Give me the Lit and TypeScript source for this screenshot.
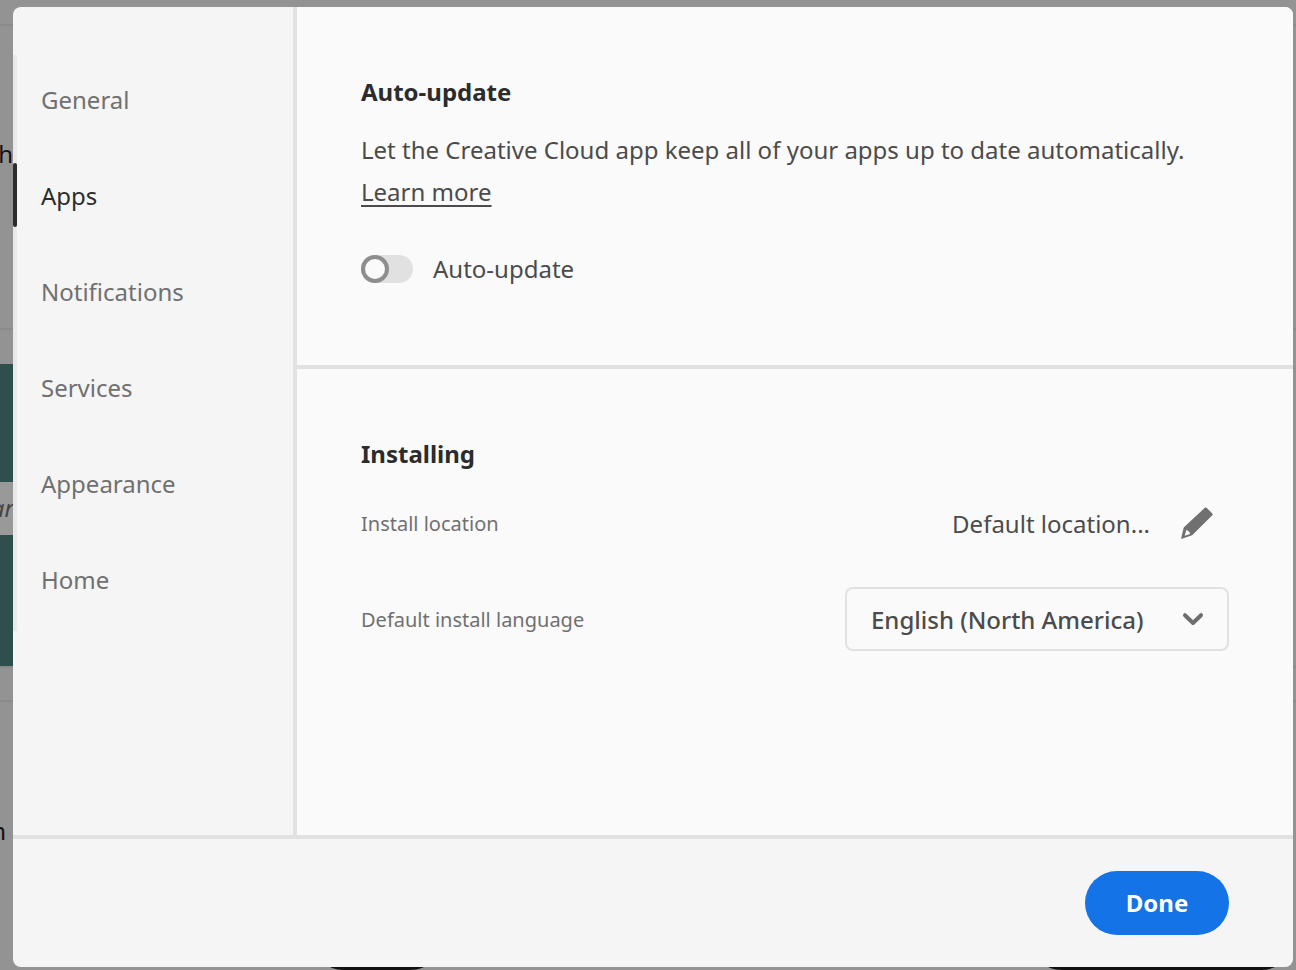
import { LitElement, html, css } from "lit";
import { customElement, state } from "lit/decorators.js";

@customElement("app-root")
export class AppRoot extends LitElement {
  @state() private selected = "Apps";

  private readonly pages = ["General", "Apps", "Notifications", "Services", "Appearance", "Home"];

  static styles = css`
    :host {
      display: block;
      font-family: "Noto Sans", "Open Sans", sans-serif;
      font-size: 24px;
      color: #4b4b4b;
    }
    * {
      box-sizing: border-box;
    }
    .page {
      position: relative;
      display: flex;
      min-height: 100vh;
      padding: 7px 3px 3px 13px;
      background: #939393;
      overflow: hidden;
    }
    .backdrop {
      position: absolute;
      inset: 0;
    }
    .rule {
      position: absolute;
      left: 0;
      right: 0;
      height: 2px;
      background: #8a8a8a;
    }
    .r1 { top: 24px; }
    .r2 { top: 328px; }
    .r3 { top: 666px; }
    .r4 { top: 700px; }
    .tile {
      position: absolute;
      left: 0;
      width: 40px;
      background: #2e4f4c;
    }
    .t1 { top: 364px; height: 118px; }
    .t2 { top: 535px; height: 131px; }
    .band {
      position: absolute;
      left: 0;
      top: 482px;
      width: 40px;
      height: 53px;
      background: #999;
    }
    .bit {
      position: absolute;
      left: 0;
      display: flex;
      justify-content: flex-end;
      line-height: 36px;
      color: #111;
    }
    .b1 { top: 136px; width: 13px; }
    .b2 { top: 490px; width: 14px; font-style: italic; color: #444; }
    .b3 { top: 813px; width: 6px; }
    .pill {
      position: absolute;
      bottom: 0;
      height: 64px;
      border: 3px solid #111;
      border-radius: 32px;
    }
    .p1 { left: 312px; width: 130px; }
    .p2 { right: 3px; width: 263px; }

    .dialog {
      position: relative;
      flex: 1;
      display: flex;
      flex-direction: column;
      border-radius: 8px;
      background: #f5f5f5;
      overflow: hidden;
    }
    .body {
      flex: 1;
      display: flex;
    }
    .side {
      width: 284px;
      padding-top: 48px;
      border-right: 4px solid #e1e1e1;
    }
    .nav {
      display: flex;
      flex-direction: column;
      gap: 32px;
      margin: 0;
      padding: 12px 0 20px;
      list-style: none;
      border-left: 4px solid #eaeaea;
    }
    .item {
      display: block;
      width: 100%;
      height: 64px;
      padding: 0 0 0 24px;
      border: 0;
      background: none;
      font: inherit;
      text-align: left;
      color: #707070;
      cursor: pointer;
    }
    .mark {
      position: relative;
    }
    .mark::before {
      content: "";
      position: absolute;
      left: -4px;
      top: 0;
      bottom: 0;
      width: 4px;
      border-radius: 2px;
      background: #2c2c2c;
    }
    .mark .item {
      color: #2c2c2c;
    }
    .main {
      flex: 1;
      display: flex;
      flex-direction: column;
      background: #fafafa;
    }
    .section {
      padding: 64px;
    }
    .section + .section {
      border-top: 4px solid #e1e1e1;
    }
    h2 {
      margin: 0 0 16px;
      font-size: 24px;
      line-height: 42px;
      font-weight: 700;
      color: #2c2c2c;
    }
    .text {
      margin: 0 0 38px;
      line-height: 42px;
    }
    .link {
      color: inherit;
      text-decoration: underline;
      text-decoration-thickness: 2px;
      text-underline-offset: 4px;
    }
    .switch {
      display: flex;
      align-items: center;
      gap: 20px;
      line-height: 36px;
      margin-bottom: 14px;
    }
    .toggle {
      appearance: none;
      width: 52px;
      height: 28px;
      margin: 0;
      border-radius: 14px;
      background: #e1e1e1;
    }
    .toggle::before {
      content: "";
      display: block;
      width: 28px;
      height: 28px;
      box-sizing: border-box;
      border: 4px solid #8e8e8e;
      border-radius: 14px;
      background: #fafafa;
    }
    .toggle:checked::before {
      margin-left: 24px;
      border-color: #1473e6;
    }
    .row {
      display: flex;
      align-items: center;
      justify-content: space-between;
      height: 64px;
    }
    .row + .row {
      margin-top: 32px;
    }
    .label {
      font-size: 20px;
      color: #707070;
    }
    .place {
      display: flex;
      align-items: center;
    }
    .edit {
      display: flex;
      align-items: center;
      justify-content: center;
      width: 64px;
      height: 64px;
      margin-left: 15px;
      padding: 0;
      border: 0;
      background: none;
    }
    .picker {
      position: relative;
      display: flex;
    }
    .select {
      appearance: none;
      width: 384px;
      height: 64px;
      padding: 0 72px 0 24px;
      border: 2px solid #e1e1e1;
      border-radius: 8px;
      background: #fafafa;
      font: inherit;
      font-weight: 500;
      color: #4b4b4b;
    }
    .chevron {
      position: absolute;
      right: 24px;
      top: 20px;
      pointer-events: none;
    }
    .foot {
      display: flex;
      justify-content: flex-end;
      padding: 32px 64px;
      border-top: 4px solid #e1e1e1;
    }
    .done {
      width: 144px;
      height: 64px;
      padding: 0 0 2px;
      border: 0;
      border-radius: 32px;
      background: #1473e6;
      font: inherit;
      font-weight: 700;
      color: #fff;
    }
  `;

  render() {
    return html`
      <div class="page">
        <div class="backdrop" aria-hidden="true">
          <div class="rule r1"></div>
          <div class="rule r2"></div>
          <div class="rule r3"></div>
          <div class="rule r4"></div>
          <div class="tile t1"></div>
          <div class="band"></div>
          <div class="tile t2"></div>
          <div class="bit b1">h</div>
          <div class="bit b2">ar</div>
          <div class="bit b3">n</div>
          <div class="pill p1"></div>
          <div class="pill p2"></div>
        </div>
        <div class="dialog" role="dialog" aria-label="Preferences">
          <div class="body">
            <nav class="side">
              <ul class="nav">
                ${this.pages.map(
                  (name) => html`<li class=${name === this.selected ? "mark" : ""}>
                    <button class="item" @click=${() => (this.selected = name)}>${name}</button>
                  </li>`
                )}
              </ul>
            </nav>
            <main class="main">
              <section class="section">
                <h2>Auto-update</h2>
                <p class="text">
                  Let the Creative Cloud app keep all of your apps up to date automatically.
                  <a class="link" href="#">Learn more</a>
                </p>
                <div class="switch">
                  <input class="toggle" id="auto" type="checkbox" role="switch" />
                  <label for="auto">Auto-update</label>
                </div>
              </section>
              <section class="section">
                <h2>Installing</h2>
                <div class="row">
                  <span class="label">Install location</span>
                  <div class="place">
                    <span>Default location...</span>
                    <button class="edit" aria-label="Edit install location">
                      <svg width="32" height="32" viewBox="0 0 32 32" fill="#707070">
                        <path
                          fill-rule="evenodd"
                          d="M23.8 .8Q24.7 0 25.6 .8L31.3 6.4Q32.1 7.3 31.3 8.2L11.4 28Q11 28.4 10.4 28.6L1 31.8Q0 32 .2 31L2.6 21Q2.8 20.4 3.2 20ZM5.4 22.8L3.7 28.8L9.2 27Q9 24.6 5.4 22.8Z"
                        />
                      </svg>
                    </button>
                  </div>
                </div>
                <div class="row">
                  <label class="label" for="lang">Default install language</label>
                  <div class="picker">
                    <select class="select" id="lang">
                      <option>English (North America)</option>
                    </select>
                    <svg class="chevron" width="24" height="24" viewBox="0 0 24 24" fill="none"
                      stroke="#6e6e6e" stroke-width="4" stroke-linecap="round" stroke-linejoin="round">
                      <path d="M4 8.2L12 16L20 8.2" />
                    </svg>
                  </div>
                </div>
              </section>
            </main>
          </div>
          <footer class="foot">
            <button class="done">Done</button>
          </footer>
        </div>
      </div>
    `;
  }
}
